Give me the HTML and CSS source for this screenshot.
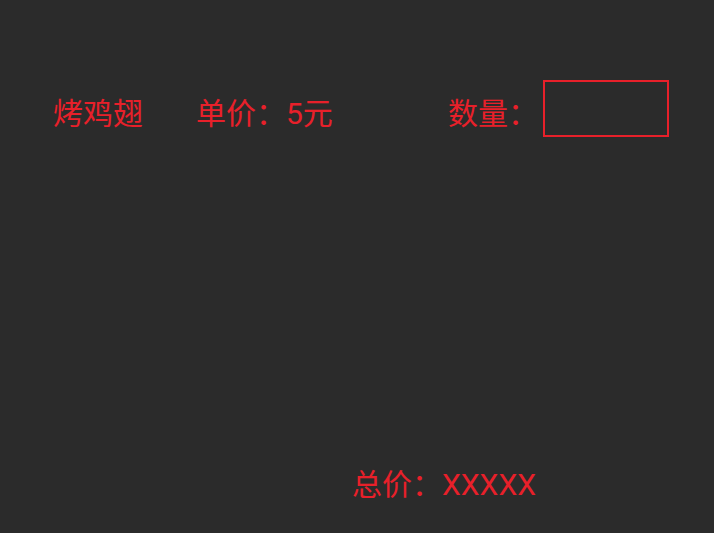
FILE: index.html
```html
<!DOCTYPE html>
<html lang="zh">
<head>
<meta charset="utf-8">
<link rel="stylesheet" href="styles.css">
</head>
<body>
<div class="page">
  <div class="row">
    <span class="name">烤鸡翅</span>
    <span class="price">单价：5元</span>
    <label class="qty"><span class="qty-label">数量：</span><input class="qty-input" type="text"></label>
  </div>
  <div class="total">总价：XXXXX</div>
</div>
</body>
</html>
```
FILE: styles.css
```css
html, body {
  margin: 0;
  padding: 0;
  background: #2b2b2b;
  height: 100%;
}
.page {
  height: 533px;
  display: flex;
  flex-direction: column;
  color: #e8202a;
  font-family: Roboto, "Noto Sans CJK SC", "Noto Sans", sans-serif;
  font-size: 30px;
  font-weight: 400;
}
.row {
  display: flex;
  align-items: center;
  padding: 80px 0 0 53px;
  height: 57px;
}
.name, .price, .qty-label {
  padding-top: 4px;
}
.name {
  width: 143px;
}
.price {
  width: 252px;
}
.qty {
  display: flex;
  align-items: center;
}
.qty-input {
  margin-left: 5px;
  width: 122px;
  height: 53px;
  box-sizing: content-box;
  padding: 0;
  border: 2px solid #e8202a;
  background: transparent;
  outline: none;
}
.total {
  margin-top: auto;
  margin-bottom: 29px;
  padding-left: 352px;
}
```
